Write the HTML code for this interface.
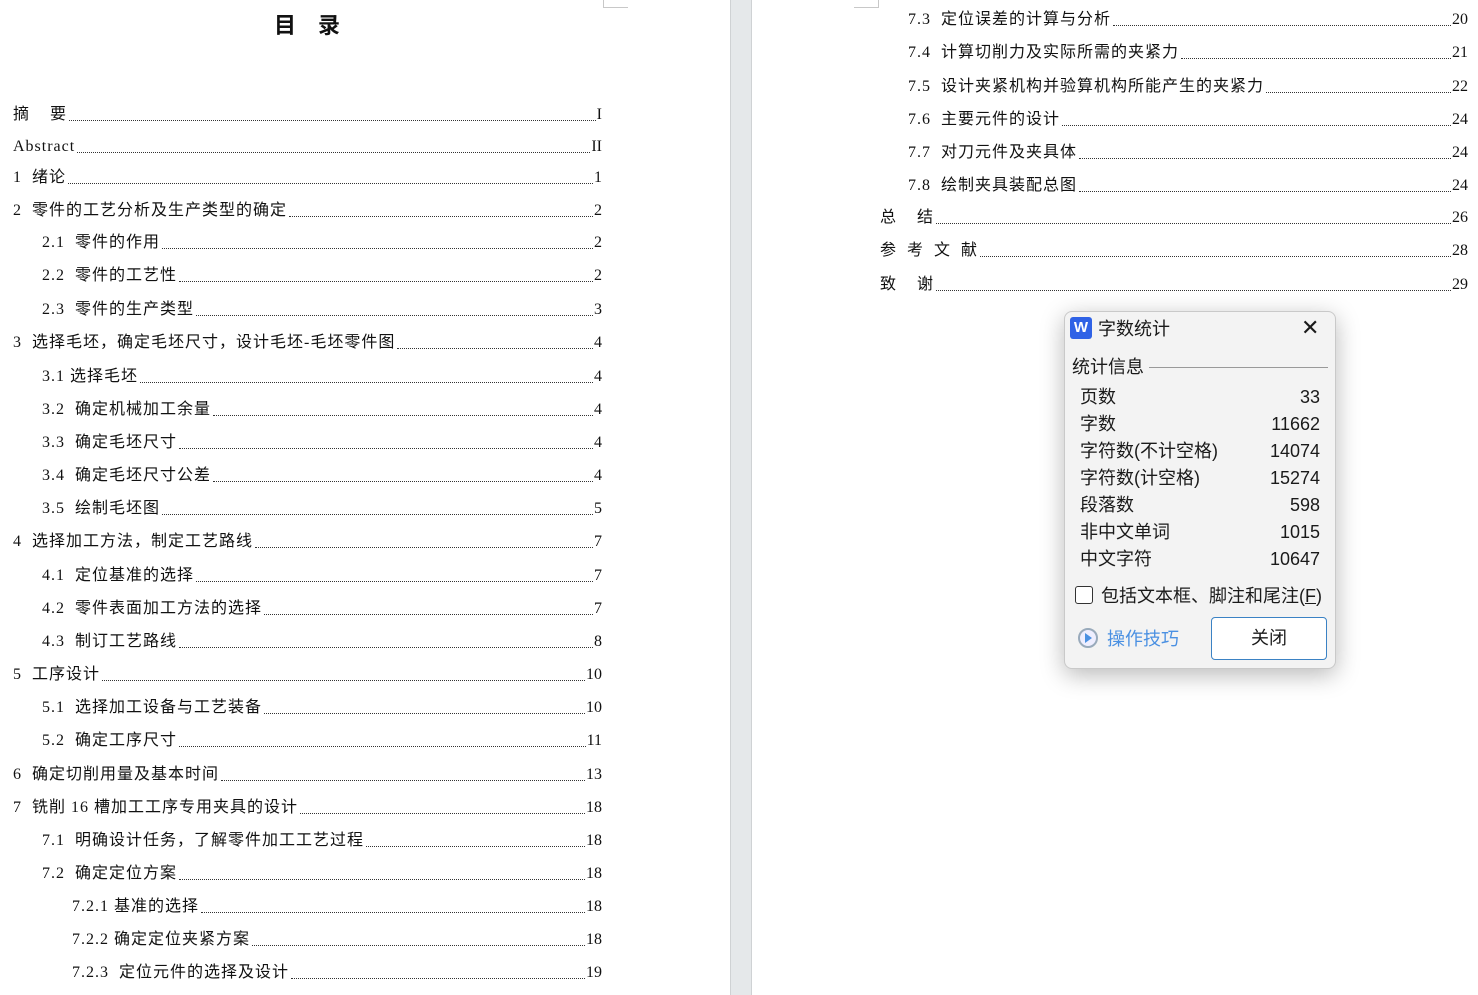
<!DOCTYPE html>
<html><head><meta charset="utf-8"><style>
body{margin:0;width:1478px;height:995px;position:relative;overflow:hidden;background:#fff;font-family:"Liberation Serif","Noto Serif CJK SC","Noto Sans CJK SC",serif;color:#111}
.gap{position:absolute;left:730px;top:0;width:20px;height:995px;background:#e5e8ea;border-left:1px solid #cfd2d4;border-right:1px solid #cfd2d4}
.cm{position:absolute;border-color:#c8c8c8;border-style:solid;width:24px;height:7px}
.r{position:absolute;display:flex;align-items:flex-end;font-size:16px;height:22px;line-height:22px;font-family:"Liberation Serif","Noto Sans CJK SC",serif}
.r span:first-child{letter-spacing:1px}
.r .f{flex:1;border-bottom:1px dotted #333;margin:0 1px 5px 2px}
.dlg{position:absolute;left:1064px;top:311px;width:270px;height:356px;background:#f3f3f3;border:1px solid #c9c9c9;border-radius:8px;box-shadow:0 6px 24px rgba(0,0,0,.28);font-family:"Liberation Sans","Noto Sans CJK SC",sans-serif;color:#1a1a1a}
.dlg .a{position:absolute;font-size:18px;line-height:24px}
</style></head><body>
<div class="gap"></div>
<div class="cm" style="left:603px;top:0;border-width:0 0 1px 1px"></div>
<div class="cm" style="left:854px;top:0;border-width:0 1px 1px 0"></div>
<div style="position:absolute;left:274px;top:8px;font-size:22px;font-weight:bold;font-family:'Noto Sans CJK SC',sans-serif;letter-spacing:22px">目录</div>

<div class="r" style="left:13px;width:589px;top:104px"><span>摘&nbsp;&nbsp;&nbsp;&nbsp;要</span><span class="f"></span><span>I</span></div>
<div class="r" style="left:13px;width:589px;top:136px"><span>Abstract</span><span class="f"></span><span>II</span></div>
<div class="r" style="left:13px;width:589px;top:167px"><span>1&nbsp; 绪论</span><span class="f"></span><span>1</span></div>
<div class="r" style="left:13px;width:589px;top:200px"><span>2&nbsp; 零件的工艺分析及生产类型的确定</span><span class="f"></span><span>2</span></div>
<div class="r" style="left:42px;width:560px;top:232px"><span>2.1&nbsp; 零件的作用</span><span class="f"></span><span>2</span></div>
<div class="r" style="left:42px;width:560px;top:265px"><span>2.2&nbsp; 零件的工艺性</span><span class="f"></span><span>2</span></div>
<div class="r" style="left:42px;width:560px;top:299px"><span>2.3&nbsp; 零件的生产类型</span><span class="f"></span><span>3</span></div>
<div class="r" style="left:13px;width:589px;top:332px"><span>3&nbsp; 选择毛坯，确定毛坯尺寸，设计毛坯-毛坯零件图</span><span class="f"></span><span>4</span></div>
<div class="r" style="left:42px;width:560px;top:366px"><span>3.1 选择毛坯</span><span class="f"></span><span>4</span></div>
<div class="r" style="left:42px;width:560px;top:399px"><span>3.2&nbsp; 确定机械加工余量</span><span class="f"></span><span>4</span></div>
<div class="r" style="left:42px;width:560px;top:432px"><span>3.3&nbsp; 确定毛坯尺寸</span><span class="f"></span><span>4</span></div>
<div class="r" style="left:42px;width:560px;top:465px"><span>3.4&nbsp; 确定毛坯尺寸公差</span><span class="f"></span><span>4</span></div>
<div class="r" style="left:42px;width:560px;top:498px"><span>3.5&nbsp; 绘制毛坯图</span><span class="f"></span><span>5</span></div>
<div class="r" style="left:13px;width:589px;top:531px"><span>4&nbsp; 选择加工方法，制定工艺路线</span><span class="f"></span><span>7</span></div>
<div class="r" style="left:42px;width:560px;top:565px"><span>4.1&nbsp; 定位基准的选择</span><span class="f"></span><span>7</span></div>
<div class="r" style="left:42px;width:560px;top:598px"><span>4.2&nbsp; 零件表面加工方法的选择</span><span class="f"></span><span>7</span></div>
<div class="r" style="left:42px;width:560px;top:631px"><span>4.3&nbsp; 制订工艺路线</span><span class="f"></span><span>8</span></div>
<div class="r" style="left:13px;width:589px;top:664px"><span>5&nbsp; 工序设计</span><span class="f"></span><span>10</span></div>
<div class="r" style="left:42px;width:560px;top:697px"><span>5.1&nbsp; 选择加工设备与工艺装备</span><span class="f"></span><span>10</span></div>
<div class="r" style="left:42px;width:560px;top:730px"><span>5.2&nbsp; 确定工序尺寸</span><span class="f"></span><span>11</span></div>
<div class="r" style="left:13px;width:589px;top:764px"><span>6&nbsp; 确定切削用量及基本时间</span><span class="f"></span><span>13</span></div>
<div class="r" style="left:13px;width:589px;top:797px"><span>7&nbsp; 铣削 16 槽加工工序专用夹具的设计</span><span class="f"></span><span>18</span></div>
<div class="r" style="left:42px;width:560px;top:830px"><span>7.1&nbsp; 明确设计任务，了解零件加工工艺过程</span><span class="f"></span><span>18</span></div>
<div class="r" style="left:42px;width:560px;top:863px"><span>7.2&nbsp; 确定定位方案</span><span class="f"></span><span>18</span></div>
<div class="r" style="left:72px;width:530px;top:896px"><span>7.2.1 基准的选择</span><span class="f"></span><span>18</span></div>
<div class="r" style="left:72px;width:530px;top:929px"><span>7.2.2 确定定位夹紧方案</span><span class="f"></span><span>18</span></div>
<div class="r" style="left:72px;width:530px;top:962px"><span>7.2.3&nbsp; 定位元件的选择及设计</span><span class="f"></span><span>19</span></div>

<div class="r" style="left:908px;width:560px;top:9px"><span>7.3&nbsp; 定位误差的计算与分析</span><span class="f"></span><span>20</span></div>
<div class="r" style="left:908px;width:560px;top:42px"><span>7.4&nbsp; 计算切削力及实际所需的夹紧力</span><span class="f"></span><span>21</span></div>
<div class="r" style="left:908px;width:560px;top:76px"><span>7.5&nbsp; 设计夹紧机构并验算机构所能产生的夹紧力</span><span class="f"></span><span>22</span></div>
<div class="r" style="left:908px;width:560px;top:109px"><span>7.6&nbsp; 主要元件的设计</span><span class="f"></span><span>24</span></div>
<div class="r" style="left:908px;width:560px;top:142px"><span>7.7&nbsp; 对刀元件及夹具体</span><span class="f"></span><span>24</span></div>
<div class="r" style="left:908px;width:560px;top:175px"><span>7.8&nbsp; 绘制夹具装配总图</span><span class="f"></span><span>24</span></div>
<div class="r" style="left:880px;width:588px;top:207px"><span>总&nbsp;&nbsp;&nbsp;&nbsp;结</span><span class="f"></span><span>26</span></div>
<div class="r" style="left:880px;width:588px;top:240px"><span>参&nbsp; 考&nbsp; 文&nbsp; 献</span><span class="f"></span><span>28</span></div>
<div class="r" style="left:880px;width:588px;top:274px"><span>致&nbsp;&nbsp;&nbsp;&nbsp;谢</span><span class="f"></span><span>29</span></div>

<div class="dlg">
<div style="position:absolute;left:5px;top:5px;width:22px;height:22px;background:#2f62e6;border-radius:3px;color:#fff;font-weight:bold;font-size:15px;line-height:22px;text-align:center">W</div>
<div class="a" style="left:33px;top:5px">字数统计</div>
<div style="position:absolute;left:236px;top:4px;font-size:22px;line-height:24px">✕</div>
<div class="a" style="left:7px;top:43px">统计信息</div>
<div style="position:absolute;left:84px;top:55px;width:179px;border-top:1px solid #999"></div>
<div class="a" style="left:15px;top:73px">页数</div><div class="a" style="right:15px;top:73px">33</div>
<div class="a" style="left:15px;top:100px">字数</div><div class="a" style="right:15px;top:100px">11662</div>
<div class="a" style="left:15px;top:127px">字符数(不计空格)</div><div class="a" style="right:15px;top:127px">14074</div>
<div class="a" style="left:15px;top:154px">字符数(计空格)</div><div class="a" style="right:15px;top:154px">15274</div>
<div class="a" style="left:15px;top:181px">段落数</div><div class="a" style="right:15px;top:181px">598</div>
<div class="a" style="left:15px;top:208px">非中文单词</div><div class="a" style="right:15px;top:208px">1015</div>
<div class="a" style="left:15px;top:235px">中文字符</div><div class="a" style="right:15px;top:235px">10647</div>
<div style="position:absolute;left:10px;top:274px;width:16px;height:16px;border:1px solid #333;border-radius:3px;background:#fff"></div>
<div class="a" style="left:36px;top:272px">包括文本框、脚注和尾注(<u>F</u>)</div>
<div style="position:absolute;left:13px;top:316px;width:16px;height:16px;border:2px solid #9ab;border-radius:50%;background:#eef"></div>
<div style="position:absolute;left:20px;top:321px;width:0;height:0;border-left:7px solid #4a90e2;border-top:5px solid transparent;border-bottom:5px solid transparent"></div>
<div class="a" style="left:42px;top:315px;color:#4a90e2">操作技巧</div>
<div style="position:absolute;left:146px;top:305px;width:114px;height:41px;background:#fff;border:1px solid #3b82c4;border-radius:4px;font-size:18px;line-height:41px;text-align:center">关闭</div>
</div>
</body></html>
